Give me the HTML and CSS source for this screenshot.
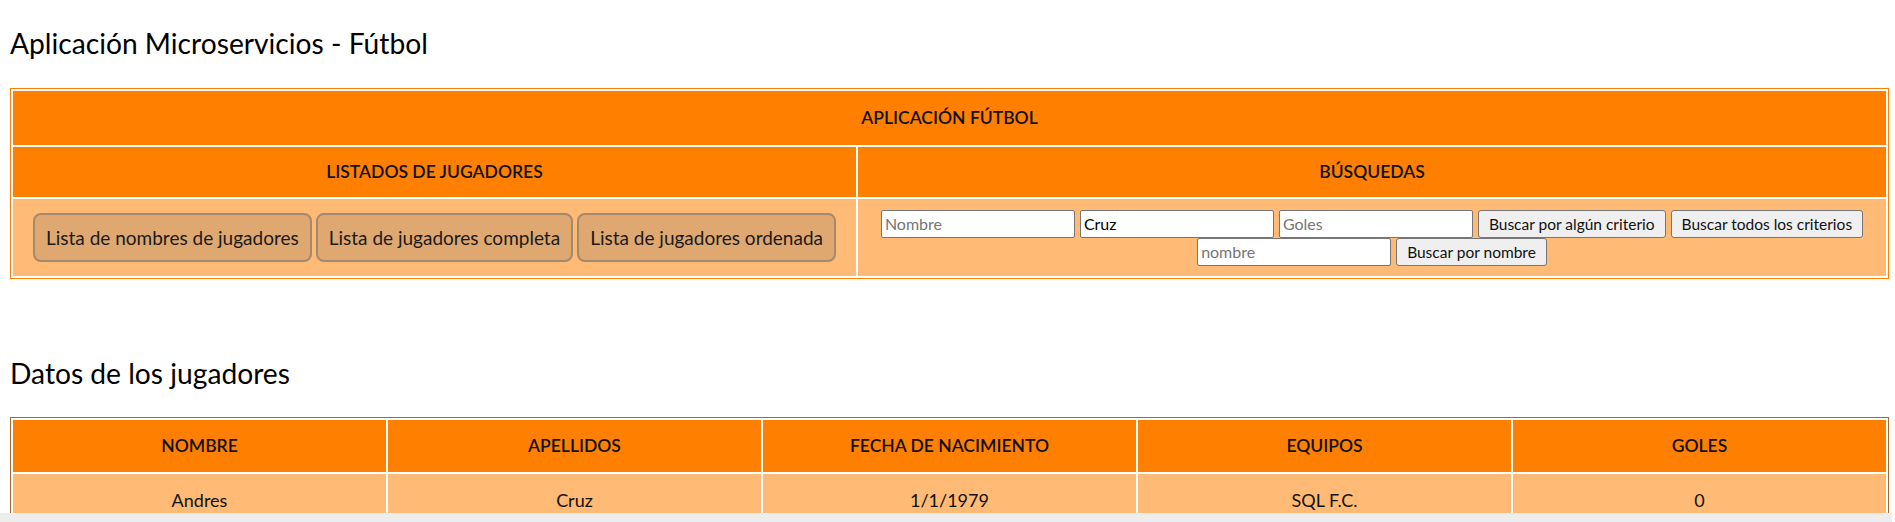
FILE: index.html
```html
<!DOCTYPE html>
<html lang="es">
<head>
<meta charset="utf-8">
<title>Aplicación Microservicios - Fútbol</title>
<link rel="stylesheet" href="styles.css">
</head>
<body>
<div class="page">
  <h2 class="title title-first">Aplicación Microservicios - Fútbol</h2>
  <table class="app-table">
    <colgroup>
      <col class="col-left">
      <col class="col-right">
    </colgroup>
    <tr>
      <th class="head-main" colspan="2">APLICACIÓN FÚTBOL</th>
    </tr>
    <tr>
      <th class="head-sub">LISTADOS DE JUGADORES</th>
      <th class="head-sub">BÚSQUEDAS</th>
    </tr>
    <tr>
      <td class="cell-lists">
        <div class="list-buttons">
          <button class="list-btn">Lista de nombres de jugadores</button>
          <button class="list-btn">Lista de jugadores completa</button>
          <button class="list-btn">Lista de jugadores ordenada</button>
        </div>
      </td>
      <td class="cell-search">
        <div class="search-line">
          <input class="field" type="text" placeholder="Nombre">
          <input class="field" type="text" placeholder="Apellidos" value="Cruz">
          <input class="field" type="text" placeholder="Goles">
          <button class="search-btn">Buscar por algún criterio</button>
          <button class="search-btn">Buscar todos los criterios</button>
        </div>
        <div class="search-line">
          <input class="field" type="text" placeholder="nombre">
          <button class="search-btn">Buscar por nombre</button>
        </div>
      </td>
    </tr>
  </table>

  <h2 class="title title-second">Datos de los jugadores</h2>
  <table class="data-table">
    <tr>
      <th>NOMBRE</th>
      <th>APELLIDOS</th>
      <th>FECHA DE NACIMIENTO</th>
      <th>EQUIPOS</th>
      <th>GOLES</th>
    </tr>
    <tr>
      <td>Andres</td>
      <td>Cruz</td>
      <td>1/1/1979</td>
      <td>SQL F.C.</td>
      <td>0</td>
    </tr>
  </table>
</div>
<div class="hscroll" aria-hidden="true"></div>
</body>
</html>
```

FILE: styles.css
```css
html, body {
  margin: 0;
  padding: 0;
  background: #ffffff;
}

body {
  font-family: Lato, "Noto Sans", "Liberation Sans", sans-serif;
  color: #111111;
}

.page {
  padding: 0 6px 0 10px;
}

.title {
  font-size: 28.2px;
  line-height: 36px;
  font-weight: 400;
  color: #000000;
  margin: 0;
}

.title-first {
  padding-top: 25px;
  margin-bottom: 27px;
}

.title-second {
  margin-top: 76px;
  margin-bottom: 26px;
}

table {
  width: 100%;
  border-collapse: separate;
  border-spacing: 2px;
  table-layout: fixed;
}

.col-left {
  width: 843px;
}

.app-table {
  border: 1px solid #ff8000;
}

.data-table {
  border: 1px solid #a8692f;
}

th {
  background: #ff8000;
  font-size: 17.5px;
  line-height: 24px;
  font-weight: 600;
  color: #111111;
  text-align: center;
}

.head-main {
  padding: 15px 4px;
}

.head-sub {
  padding: 13px 4px;
}

td {
  background: #ffba75;
  text-align: center;
  vertical-align: middle;
  font-size: 18px;
  line-height: 24px;
}

.cell-lists {
  padding: 14px 4px;
}

.list-buttons {
  display: flex;
  justify-content: center;
  gap: 4px;
}

.list-btn {
  font-family: inherit;
  font-size: 19px;
  line-height: 25px;
  color: #1a1a1a;
  background: #dfa871;
  border: 2px solid #a3896e;
  border-radius: 8px;
  padding: 10px 11px;
  white-space: nowrap;
}

.cell-search {
  padding: 4px;
}

.search-line {
  display: flex;
  justify-content: center;
  gap: 5px;
}

.field {
  box-sizing: border-box;
  width: 194px;
  height: 28px;
  font-family: inherit;
  font-size: 16px;
  color: #000000;
  background: #ffffff;
  border: 1px solid #767676;
  border-radius: 2px;
  padding: 2px 3px;
  margin: 0;
}

.field::placeholder {
  color: #757575;
}

.search-btn {
  box-sizing: border-box;
  height: 28px;
  font-family: inherit;
  font-size: 15.5px;
  color: #111111;
  background: #efefef;
  border: 1px solid #767676;
  border-radius: 3px;
  padding: 1px 10px;
  margin: 0;
  white-space: nowrap;
}

.data-table th {
  padding: 14px 4px;
}

.data-table td {
  padding: 14px 4px;
}

.hscroll {
  position: fixed;
  left: 0;
  bottom: 0;
  width: 1892px;
  height: 9px;
  background: #ededed;
}
```
